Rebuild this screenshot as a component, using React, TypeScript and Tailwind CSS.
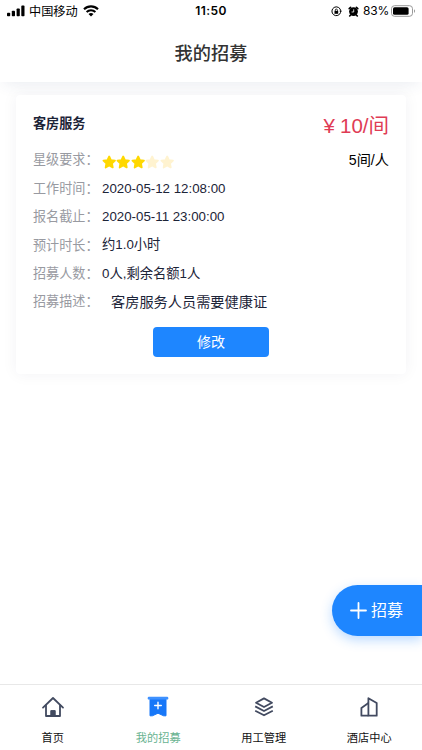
import type { ReactNode } from 'react';

const Star = ({ active }: { active: boolean }) => (
  <svg viewBox="0 0 24 24" className={`h-[14.4px] w-[14.4px] ${active ? 'text-[#ffd800]' : 'text-[#fff3d0]'}`}>
    <path
      d="M12 2.4l2.9 6.1 6.7.9-4.9 4.7 1.2 6.7L12 17.6l-5.9 3.2 1.2-6.7-4.9-4.7 6.7-.9z"
      fill="currentColor"
      stroke="currentColor"
      strokeWidth="3"
      strokeLinejoin="round"
    />
  </svg>
);

const StatusBar = () => (
  <div className="flex h-[22px] items-center px-[7px] text-[12px] text-black">
    <div className="flex flex-1 items-center">
      <svg width="18" height="12" viewBox="0 0 18 12" fill="currentColor">
        <rect x="0" y="7.8" width="3.2" height="3.4" rx="0.8" />
        <rect x="4.8" y="5.8" width="3.2" height="5.4" rx="0.8" />
        <rect x="9.6" y="3.4" width="3.2" height="7.8" rx="0.8" />
        <rect x="14.3" y="0.6" width="3.2" height="10.6" rx="0.8" />
      </svg>
      <span className="ml-[4px] whitespace-nowrap pt-[2px] text-[12.2px]">中国移动</span>
      <svg className="ml-[5px]" width="16" height="12" viewBox="0 0 16 12" fill="none" stroke="currentColor">
        <path d="M1 4.2a10 10 0 0 1 14 0" strokeWidth="2.1" />
        <path d="M3.6 7a6.3 6.3 0 0 1 8.8 0" strokeWidth="2" />
        <path d="M8 11.6L5.5 9.1a3.6 3.6 0 0 1 5 0z" fill="currentColor" stroke="none" />
      </svg>
    </div>
    <span className="font-['Inter','Liberation_Sans',sans-serif] text-[12px] font-semibold tracking-[0.4px]">11:50</span>
    <div className="flex flex-1 items-center justify-end">
      {/* Rotation lock */}
      <svg width="11" height="11" viewBox="0 0 11 11" fill="none" stroke="currentColor">
        <path d="M9.6 6.3a4.4 4.4 0 1 1 .1-1.5" strokeWidth="1" />
        <path d="M8.3 4.8h2.7L9.7 6.6z" fill="currentColor" stroke="none" />
        <rect x="3.5" y="4.9" width="3.7" height="2.9" fill="currentColor" stroke="none" />
        <path d="M4.3 5V4.1a1.05 1.05 0 0 1 2.1 0V5" strokeWidth="0.8" />
      </svg>
      {/* Alarm */}
      <svg className="ml-[6px]" width="11" height="11" viewBox="0 0 11 11">
        <circle cx="5.5" cy="5.6" r="4.4" fill="currentColor" />
        <path d="M1.2 2.6L2.6 1.3M9.8 2.6L8.4 1.3M2.6 9l-.9 1M8.4 9l.9 1" stroke="currentColor" strokeWidth="1.6" strokeLinecap="round" />
        <path d="M5.7 3.3V6H3.6" fill="none" stroke="white" strokeWidth="0.8" />
      </svg>
      <span className="ml-[4px] font-['Inter','Liberation_Sans',sans-serif] text-[12px] tracking-[-0.2px]">83%</span>
      <svg className="-mr-[1px] ml-[2px]" width="25" height="12" viewBox="0 0 25 12">
        <rect x="0.5" y="0.7" width="21" height="10.6" rx="3" fill="none" stroke="#999" />
        <rect x="2" y="2.2" width="15.6" height="7.6" rx="1.6" fill="black" />
        <path d="M23 4.2v3.6c1.4-.5 1.4-3.1 0-3.6z" fill="#999" />
      </svg>
    </div>
  </div>
);

const Row = ({ label, children }: { label: string; children: ReactNode }) => (
  <div className="flex h-[28.4px] items-center whitespace-nowrap text-[13.3px] text-[#1c2438]">
    <span className="w-[69px] shrink-0 text-[13.1px] text-[#989aa1]">{label}：</span>
    {children}
  </div>
);

const HomeIcon = () => (
  <svg width="24" height="24" viewBox="0 0 24 24" fill="none" stroke="#424a60" strokeWidth="1.8" strokeLinecap="round" strokeLinejoin="round">
    <path d="M2 12.6L12 3l10 9.6" />
    <path d="M5 10.5V21h14V10.5" />
    <path d="M9.8 21v-5.4h4.4V21z" fill="#424a60" strokeWidth="1" />
  </svg>
);

const RecruitIcon = () => (
  <svg width="24" height="24" viewBox="0 0 24 24">
    <path d="M4 3h16v17.8h-2.4L12 18.2l-5.6 2.6H4z" fill="#1777f8" stroke="#1777f8" strokeLinejoin="round" />
    <rect x="1.7" y="1.8" width="20.6" height="2.8" rx="1.2" fill="#3e91ff" />
    <path d="M12 7.2v6.6M8.7 10.5h6.6" stroke="white" strokeWidth="1.4" strokeLinecap="round" />
  </svg>
);

const StackIcon = () => (
  <svg width="24" height="24" viewBox="0 0 24 24" fill="none" stroke="#424a60" strokeWidth="1.8" strokeLinejoin="round">
    <path d="M12 3.4l8 4.3-8 4.3-8-4.3z" />
    <path d="M3.2 11.4L12 16l8.8-4.6" />
    <path d="M3.2 15.7L12 20.3l8.8-4.6" />
  </svg>
);

const HotelIcon = () => (
  <svg width="24" height="24" viewBox="0 0 24 24" fill="none" stroke="#424a60" strokeWidth="1.8" strokeLinejoin="round">
    <path d="M11.4 20.7V3.2l8.3 4.8v12.7z" />
    <path d="M11.4 8.1L4.4 13v7.7h7" />
  </svg>
);

const tabs = [
  { label: '首页', icon: <HomeIcon />, active: false },
  { label: '我的招募', icon: <RecruitIcon />, active: true },
  { label: '用工管理', icon: <StackIcon />, active: false },
  { label: '酒店中心', icon: <HotelIcon />, active: false },
];

const App = () => (
  <div className="relative flex h-[750px] w-[422px] flex-col overflow-hidden bg-white font-['Liberation_Sans','Noto_Sans_CJK_SC',sans-serif]">
    <header className="relative z-10 h-[82px] shrink-0 bg-white shadow-[0_6px_14px_-4px_rgba(50,70,120,0.10)]">
      <StatusBar />
      <h1 className="flex h-[60px] items-center justify-center pt-[5px] text-[18.2px] font-medium text-[#333]">我的招募</h1>
    </header>

    <main className="flex-1 px-4 pt-[13px]">
      <section className="relative z-20 h-[279px] w-[390px] rounded-[4px] bg-white px-[17px] pt-[14px] shadow-[0_0_16px_rgba(40,45,70,0.055)]">
        <div className="flex h-[37px] justify-between">
          <h2 className="pt-[5px] text-[13.1px] leading-[20px] font-bold text-[#1c2438]">客房服务</h2>
          <span className="flex text-[20.5px] leading-[34px] text-[#df3c55]">
            <span className="mr-[5px]">¥</span>10/间
          </span>
        </div>
        <div className="flex items-center justify-between">
          <Row label="星级要求">
            <div className="flex pt-[3px]">
              {[1, 2, 3, 4, 5].map((n) => (
                <Star key={n} active={n <= 3} />
              ))}
            </div>
          </Row>
          <span className="text-[14.2px] text-black">5间/人</span>
        </div>
        <Row label="工作时间">2020-05-12 12:08:00</Row>
        <Row label="报名截止">2020-05-11 23:00:00</Row>
        <Row label="预计时长">约1.0小时</Row>
        <Row label="招募人数">0人,剩余名额1人</Row>
        <Row label="招募描述">
          <span className="pl-[9px] text-[14.2px]">客房服务人员需要健康证</span>
        </Row>
        <button type="button" className="mx-auto mt-[11px] block h-[30px] w-[116px] rounded-[4px] bg-[#1e86ff] pt-px text-[14px] text-white">
          修改
        </button>
      </section>
    </main>

    {/* Floating create button */}
    <button
      type="button"
      className="absolute top-[585px] right-0 flex h-[51px] w-[90px] items-center rounded-l-full bg-[#1e86ff] pl-[18px] text-[16px] text-white shadow-[0_4px_12px_rgba(30,134,255,0.3)]"
    >
      <svg width="17" height="17" viewBox="0 0 17 17" stroke="currentColor" strokeWidth="1.8" strokeLinecap="round">
        <path d="M8.5 1v15M1 8.5h15" />
      </svg>
      <span className="ml-[4px] whitespace-nowrap">招募</span>
    </button>

    <nav className="grid h-[66px] shrink-0 grid-cols-4 border-t border-[#e8e8e8] bg-white">
      {tabs.map((tab) => (
        <div key={tab.label} className="flex flex-col items-center pt-[10px]">
          {tab.icon}
          <span className={`mt-[11px] text-[11.2px] leading-[16px] ${tab.active ? 'text-[#69b391]' : 'text-[#111]'}`}>
            {tab.label}
          </span>
        </div>
      ))}
    </nav>
  </div>
);

export default App;
